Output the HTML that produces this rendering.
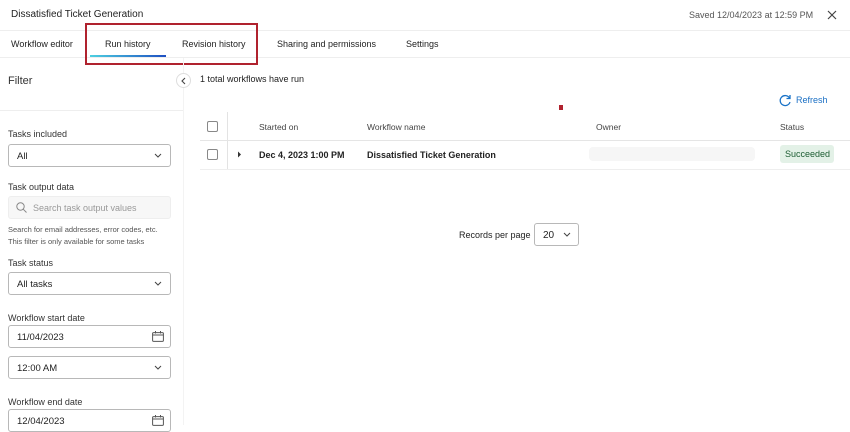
<!DOCTYPE html>
<html><head><meta charset="utf-8"><style>
*{box-sizing:border-box;margin:0;padding:0}
body{width:850px;height:425px;overflow:hidden;background:#fff;font-family:"Liberation Sans",sans-serif;color:#1f1f1f;position:relative}
.a{position:absolute;white-space:nowrap}
.f{font-size:9px}
.box{position:absolute;left:8px;width:163px;height:23px;border:1px solid #b8b8b8;border-radius:3px;background:#fff;font-size:9.5px;padding:6px 8px}
.chev{position:absolute;right:8px;top:8px}
.lbl{font-size:9px;color:#333;position:absolute;left:8px}
.cb{position:absolute;width:11px;height:11px;border:1px solid #888;border-radius:2px;background:#fff}
</style></head><body>
<div class="a" style="left:11px;top:9px;font-size:10px;color:#222">Dissatisfied Ticket Generation</div>
<div class="a" style="left:689px;top:10px;font-size:9px;color:#555">Saved 12/04/2023 at 12:59 PM</div>
<svg class="a" style="left:827px;top:10px" width="10" height="10" viewBox="0 0 10 10"><path d="M1 1L9 9M9 1L1 9" stroke="#444" stroke-width="1.2"/></svg>
<div class="a" style="left:0;top:30px;width:850px;border-top:1px solid #eee"></div>
<div class="a f" style="left:11px;top:39px;color:#222">Workflow editor</div>
<div class="a f" style="left:105px;top:39px;color:#222">Run history</div>
<div class="a f" style="left:182px;top:39px;color:#222">Revision history</div>
<div class="a f" style="left:277px;top:39px;color:#222">Sharing and permissions</div>
<div class="a f" style="left:406px;top:39px;color:#222">Settings</div>
<div class="a" style="left:90px;top:55px;width:76px;height:2px;background:linear-gradient(90deg,#4dd0e1,#1e4fc2)"></div>
<div class="a" style="left:0;top:57px;width:850px;border-top:1px solid #eee"></div>
<div class="a" style="left:85px;top:23px;width:173px;height:42px;border:2px solid #b0222e"></div>
<div class="a" style="left:8px;top:75px;font-size:11px;color:#333">Filter</div>
<div class="a" style="left:0;top:110px;width:183px;border-top:1px solid #eee"></div>
<div class="a" style="left:183px;top:58px;height:367px;border-left:1px solid #f3f3f3"></div>
<div class="a" style="left:176px;top:73px;width:15px;height:15px;border:1px solid #ddd;border-radius:50%;background:#fff"></div>
<svg class="a" style="left:180px;top:77px" width="8" height="8" viewBox="0 0 8 8"><path d="M5 1L2 4L5 7" stroke="#444" fill="none" stroke-width="1.1"/></svg>
<div class="a" style="left:200px;top:74px;font-size:9px;color:#222">1 total workflows have run</div>
<svg class="a" style="left:779px;top:94px" width="13" height="13" viewBox="0 0 13 13"><path d="M10.5 4A5 5 0 1 0 11 8" stroke="#1a73c8" fill="none" stroke-width="1.3"/><path d="M11 1V4.5H7.5" stroke="#1a73c8" fill="none" stroke-width="1.3"/></svg>
<div class="a" style="left:796px;top:95px;font-size:9px;color:#1a6fc4">Refresh</div>
<div class="a" style="left:559px;top:105px;width:4px;height:5px;background:#b0222e"></div>
<div class="a" style="left:227px;top:112px;height:58px;border-left:1px solid #e3e3e3"></div>
<div class="cb" style="left:207px;top:121px"></div>
<div class="a" style="left:259px;top:122px;font-size:8.5px;color:#444">Started on</div>
<div class="a" style="left:367px;top:122px;font-size:8.5px;color:#444">Workflow name</div>
<div class="a" style="left:596px;top:122px;font-size:8.5px;color:#444">Owner</div>
<div class="a" style="left:780px;top:122px;font-size:8.5px;color:#444">Status</div>
<div class="a" style="left:200px;top:140px;width:650px;border-top:1px solid #e5e5e5"></div>
<div class="cb" style="left:207px;top:149px"></div>
<svg class="a" style="left:237px;top:151px" width="5" height="7" viewBox="0 0 5 7"><path d="M1 0.5L4 3.5L1 6.5Z" fill="#333"/></svg>
<div class="a" style="left:259px;top:150px;font-size:9px;font-weight:bold;color:#222">Dec 4, 2023 1:00 PM</div>
<div class="a" style="left:367px;top:150px;font-size:9px;font-weight:bold;color:#222">Dissatisfied Ticket Generation</div>
<div class="a" style="left:589px;top:147px;width:166px;height:14px;background:#f6f6f6;border-radius:4px"></div>
<div class="a" style="left:780px;top:145px;width:54px;height:18px;background:#e3f1e7;border-radius:3px;font-size:9px;color:#1d5e33;padding:4px 0 0 5px">Succeeded</div>
<div class="a" style="left:200px;top:169px;width:650px;border-top:1px solid #eee"></div>
<div class="a" style="left:459px;top:230px;font-size:9px;color:#222">Records per page</div>
<div class="a" style="left:534px;top:223px;width:45px;height:23px;border:1px solid #b8b8b8;border-radius:3px;font-size:10px;padding:6px 0 0 8px">20</div>
<svg class="a" style="left:563px;top:232px" width="8" height="5" viewBox="0 0 8 5"><path d="M1 1L4 4L7 1" stroke="#444" fill="none"/></svg>
<div class="lbl" style="top:129px">Tasks included</div>
<div class="box" style="top:144px">All<svg class="chev" width="8" height="5" viewBox="0 0 8 5"><path d="M1 1L4 4L7 1" stroke="#444" fill="none"/></svg></div>
<div class="lbl" style="top:182px">Task output data</div>
<div class="box" style="top:196px;border-color:#eee;background:#f7f7f7;color:#999;padding-left:24px;font-size:9px">Search task output values<svg style="position:absolute;left:7px;top:5px" width="11" height="11" viewBox="0 0 11 11"><circle cx="4.5" cy="4.5" r="3.7" stroke="#888" fill="none"/><path d="M7.2 7.2L10.5 10.5" stroke="#888"/></svg></div>
<div class="a" style="left:8px;top:224px;font-size:7.5px;color:#555;line-height:12px">Search for email addresses, error codes, etc.<br>This filter is only available for some tasks</div>
<div class="lbl" style="top:258px">Task status</div>
<div class="box" style="top:272px">All tasks<svg class="chev" width="8" height="5" viewBox="0 0 8 5"><path d="M1 1L4 4L7 1" stroke="#444" fill="none"/></svg></div>
<div class="lbl" style="top:313px">Workflow start date</div>
<div class="box" style="top:325px">11/04/2023<svg style="position:absolute;right:6px;top:5px" width="12" height="11" viewBox="0 0 12 11"><rect x="0.6" y="1.6" width="10.8" height="8.8" rx="1" stroke="#555" fill="none"/><path d="M0.6 4H11.4M3.5 0V2.5M8.5 0V2.5" stroke="#555"/></svg></div>
<div class="box" style="top:356px">12:00 AM<svg class="chev" width="8" height="5" viewBox="0 0 8 5"><path d="M1 1L4 4L7 1" stroke="#444" fill="none"/></svg></div>
<div class="lbl" style="top:397px">Workflow end date</div>
<div class="box" style="top:409px">12/04/2023<svg style="position:absolute;right:6px;top:5px" width="12" height="11" viewBox="0 0 12 11"><rect x="0.6" y="1.6" width="10.8" height="8.8" rx="1" stroke="#555" fill="none"/><path d="M0.6 4H11.4M3.5 0V2.5M8.5 0V2.5" stroke="#555"/></svg></div>
</body></html>
